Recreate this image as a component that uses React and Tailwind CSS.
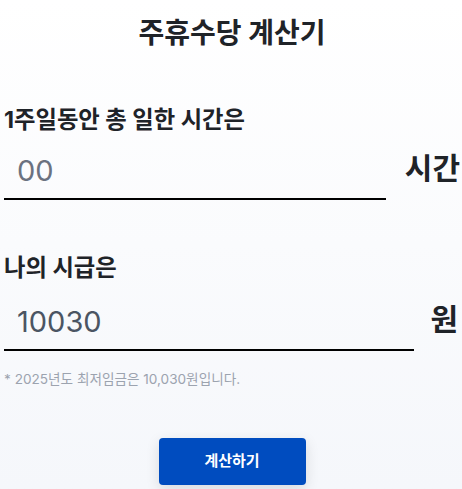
export default function App() {
  const font = { fontFamily: 'Inter, "Noto Sans CJK KR", "Noto Sans", sans-serif' };
  return (
    <div
      className="min-h-screen w-full bg-gradient-to-b from-white to-[#f5f7fb] pl-1 pr-[2px] text-[#1f2328]"
      style={font}
    >
      <h1 className="pt-[14px] text-center text-[28px] font-bold leading-[38px]">주휴수당 계산기</h1>

      <div className="mt-[54px]">
        <label className="block text-[23.3px] font-bold leading-[28px]">1주일동안 총 일한 시간은</label>
        <div className="mt-[8px] flex items-start gap-[19px]">
          <input
            className="h-[58px] min-w-0 flex-1 border-b-2 border-black bg-transparent px-[13px] text-[29px] text-[#4b5563] outline-none placeholder:text-[#6b7280]"
            placeholder="00"
          />
          <span className="pt-[8px] text-[30px] font-bold leading-[36px]">시간</span>
        </div>
      </div>

      <div className="mt-[54px]">
        <label className="block text-[23.3px] font-bold leading-[28px]">나의 시급은</label>
        <div className="mt-[11px] flex items-start gap-[16px]">
          <input
            className="h-[58px] min-w-0 flex-1 border-b-2 border-black bg-transparent px-[13px] text-[29px] text-[#4b5563] outline-none"
            defaultValue="10030"
          />
          <span className="pt-[8px] pr-[2px] text-[30px] font-bold leading-[36px]">원</span>
        </div>
      </div>

      <p className="mt-[18px] text-[13.6px] leading-[20px] text-[#9ca3af]">* 2025년도 최저임금은 10,030원입니다.</p>

      <div className="mt-[49px] flex justify-center">
        <button className="h-[47px] w-[147px] rounded-[4px] bg-[#004cbf] text-[15px] font-bold text-white shadow-[0_4px_14px_rgba(0,0,0,0.12)]">
          계산하기
        </button>
      </div>
    </div>
  );
}
